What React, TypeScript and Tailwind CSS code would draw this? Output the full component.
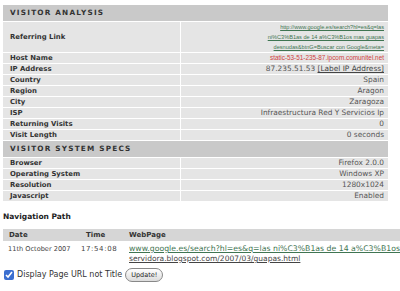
import React from "react";

type Row = { label: string; value: React.ReactNode; tall?: boolean };

const analysis: Row[] = [
  {
    label: "Referring Link",
    tall: true,
    value: (
      <a href="#" className="font-['Liberation_Sans',sans-serif] text-[5.6px] leading-[9px] text-[#3f7552] underline">
        http://www.google.es/search?hl=es&amp;q=las
        <br />
        ni%C3%B1as de 14 a%C3%B1os mas guapas
        <br />
        desnudas&amp;btnG=Buscar con Google&amp;meta=
      </a>
    ),
  },
  {
    label: "Host Name",
    value: (
      <span className="font-['Liberation_Sans',sans-serif] text-[6.4px] text-[#d0413f]">static-53-51-235-87.ipcom.comunitel.net</span>
    ),
  },
  {
    label: "IP Address",
    value: (
      <>
        87.235.51.53 <a href="#" className="text-[#444] underline">[Label IP Address]</a>
      </>
    ),
  },
  { label: "Country", value: "Spain" },
  { label: "Region", value: "Aragon" },
  { label: "City", value: "Zaragoza" },
  { label: "ISP", value: "Infraestructura Red Y Servicios Ip" },
  { label: "Returning Visits", value: "0" },
  { label: "Visit Length", value: "0 seconds" },
];

const specs: Row[] = [
  { label: "Browser", value: "Firefox 2.0.0" },
  { label: "Operating System", value: "Windows XP" },
  { label: "Resolution", value: "1280x1024" },
  { label: "Javascript", value: "Enabled" },
];

function Header({ title }: { title: string }) {
  return (
    <tr>
      <td colSpan={2} className="h-[16px] bg-[#c9c9c9] pl-[7px] text-[7.3px] font-bold tracking-[1.2px] text-[#333]">
        {title}
      </td>
    </tr>
  );
}

function DataRow({ row }: { row: Row }) {
  return (
    <tr>
      <td className={`${row.tall ? "h-[28px]" : "h-[10px]"} bg-[#e5e5e5] pl-[7px] text-[6.9px] font-bold text-[#333]`}>
        {row.label}
      </td>
      <td className="bg-[#e5e5e5] pr-[4px] text-right text-[7.4px] leading-[10px] text-[#555]">{row.value}</td>
    </tr>
  );
}

export default function App() {
  return (
    <div className="h-[291px] w-[400px] overflow-hidden bg-white font-['DejaVu_Sans',sans-serif] text-[7px] leading-[10px]">
      <table className="ml-[2px] mt-[4px] w-[387px] border-separate border-spacing-[1px] bg-white">
        <colgroup>
          <col className="w-[177px]" />
          <col />
        </colgroup>
        <tbody>
          <Header title="VISITOR ANALYSIS" />
          {analysis.map((row) => (
            <DataRow key={row.label} row={row} />
          ))}
          <Header title="VISITOR SYSTEM SPECS" />
          {specs.map((row) => (
            <DataRow key={row.label} row={row} />
          ))}
        </tbody>
      </table>

      <p className="ml-[3px] mt-[10px] text-[7.5px] font-bold text-[#222]">Navigation Path</p>

      <table className="ml-[3px] mt-[7px] w-[760px] table-fixed border-collapse whitespace-nowrap">
        <colgroup>
          <col className="w-[78px]" />
          <col className="w-[45px]" />
          <col />
        </colgroup>
        <thead>
          <tr className="bg-[#d6d6d6] text-left font-bold text-[#333]">
            <th className="h-[12px] pl-[6px]">Date</th>
            <th className="pl-[5px]">Time</th>
            <th className="pl-[3px]">WebPage</th>
          </tr>
        </thead>
        <tbody>
          <tr className="align-top text-[#444]">
            <td className="pl-[5px] pt-[3px] text-[6.6px]">11th October 2007</td>
            <td className="pt-[3px] text-[7px] tracking-[0.6px]">17:54:08</td>
            <td className="pl-[3px] pt-[3px] text-[7.5px]">
              <a href="#" className="text-[7.75px] text-[#3f7552] underline">
                www.google.es/search?hl=es&amp;q=las ni%C3%B1as de 14 a%C3%B1os mas guapas desnudas&amp;btnG=Buscar con Google&amp;meta=
              </a>
              <br />
              <a href="#" className="text-[#444] underline">
                servidora.blogspot.com/2007/03/guapas.html
              </a>
            </td>
          </tr>
        </tbody>
      </table>

      <div className="ml-[4px] mt-[4px] flex items-center gap-[3px] text-[8px] text-[#333]">
        <input type="checkbox" defaultChecked className="h-[10px] w-[10px] accent-[#3b6fd0]" />
        <span>Display Page URL not Title</span>
        <button
          type="button"
          className="rounded-full border border-[#888] bg-gradient-to-b from-white to-[#dcdcdc] px-[5px] py-[1px] text-[6.5px] text-[#222]"
        >
          Update!
        </button>
      </div>
    </div>
  );
}
